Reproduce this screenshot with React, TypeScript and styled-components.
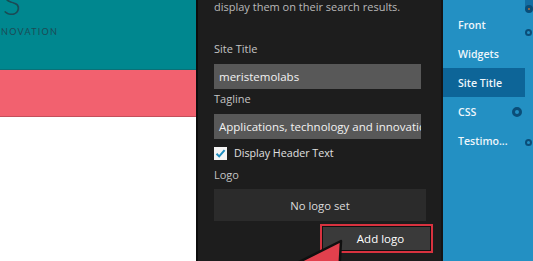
import { createGlobalStyle, styled } from 'styled-components'

const GlobalStyle = createGlobalStyle`
  html, body {
    margin: 0;
    padding: 0;
    background: #ffffff;
  }
  body {
    font-family: 'Open Sans', 'Liberation Sans', sans-serif;
  }
`

const Screen = styled.div`
  position: relative;
  width: 533px;
  height: 261px;
  display: flex;
  overflow: hidden;
`

/* ---------- site preview on the left ---------- */

const Preview = styled.div`
  width: 196px;
  display: flex;
  flex-direction: column;
  flex-shrink: 0;
`

const Masthead = styled.div`
  height: 70px;
  background: #00878f;
  border-bottom: 1px solid #0b7077;
  box-sizing: border-box;
  overflow: hidden;
  color: #1c4b55;
`

const LogoGlyph = styled.div`
  font-family: Lato, 'Liberation Sans', sans-serif;
  font-weight: 300;
  font-size: 34px;
  line-height: 27px;
  height: 27px;
  margin-top: -12px;
  margin-left: 3px;
`

const Slogan = styled.div`
  font-family: Lato, 'Liberation Sans', sans-serif;
  font-size: 9px;
  line-height: 11px;
  letter-spacing: 1.3px;
  margin-top: 11px;
  margin-left: 1px;
`

const Band = styled.div`
  height: 47px;
  background: #f2616f;
  border-bottom: 1px solid #c44f5b;
  box-sizing: border-box;
`

const Blank = styled.div`
  flex: 1;
  background: #ffffff;
`

const Divider = styled.div`
  width: 2px;
  background: #0d0d0d;
  flex-shrink: 0;
`

/* ---------- customizer panel ---------- */

const Panel = styled.div`
  width: 243px;
  flex-shrink: 0;
  background: #1d1d1d;
  padding: 0 0 0 16px;
  box-sizing: border-box;
  display: flex;
  flex-direction: column;
  color: #c8c8c8;
  font-size: 11px;
`

const Note = styled.div`
  line-height: 16px;
  margin-top: -1px;
  color: #b9b9b9;
  font-size: 11px;
`

const Label = styled.div<{ $top: number }>`
  line-height: 16px;
  margin-top: ${(p) => p.$top}px;
  color: #c4c4c4;
`

const Field = styled.div`
  width: 207px;
  height: 25px;
  margin-top: 7px;
  background: #585858;
  color: #f2f2f2;
  box-sizing: border-box;
  padding: 0 5px;
  display: flex;
  align-items: center;
  white-space: nowrap;
  overflow: hidden;
  font-size: 11.5px;
`

const CheckRow = styled.label`
  display: flex;
  align-items: center;
  gap: 7px;
  margin-top: 8px;
  height: 12px;
  color: #e0e0e0;
  font-size: 10.7px;
`

const Box = styled.span`
  width: 13px;
  height: 13px;
  background: #f4f4f4;
  display: flex;
  align-items: center;
  justify-content: center;
`

const LogoSlot = styled.div`
  width: 212px;
  height: 32px;
  margin-top: 6px;
  background: #2b2b2b;
  display: flex;
  align-items: center;
  justify-content: center;
  color: #dcdcdc;
  font-size: 11.3px;
`

const AddButton = styled.button`
  align-self: flex-start;
  margin: 3px 0 0 106px;
  width: 113px;
  height: 29px;
  box-sizing: border-box;
  border: 2px solid #d8323f;
  outline: 1px solid #111;
  outline-offset: -3px;
  background: #3a3a3a;
  color: #ffffff;
  font-family: 'Open Sans', 'Liberation Sans', sans-serif;
  font-size: 11.5px;
  padding: 0 0 0 8px;
`

const Gutter = styled.div`
  width: 2px;
  background: #141414;
  flex-shrink: 0;
`

/* ---------- section list on the right ---------- */

const Sections = styled.div`
  flex: 1;
  background: #2390c3;
  display: flex;
  flex-direction: column;
  margin-top: -19px;
`

const Section = styled.div<{ $active?: boolean }>`
  position: relative;
  height: 29px;
  width: 82px;
  box-sizing: border-box;
  padding-left: 15px;
  display: flex;
  align-items: center;
  background: ${(p) => (p.$active ? '#0d6598' : 'transparent')};
  color: #eef6fb;
  font-weight: 600;
  font-size: 10.6px;
  white-space: nowrap;
`

const EdgeTab = styled.div`
  position: absolute;
  left: 82px;
  top: 0;
  width: 12px;
  height: 29px;
  background: #136ea3;
`

const Dot = styled.span<{ $x: number; $y: number; $size: number; $fill: string }>`
  position: absolute;
  left: ${(p) => p.$x}px;
  top: ${(p) => p.$y}px;
  width: ${(p) => p.$size}px;
  height: ${(p) => p.$size}px;
  border-radius: 50%;
  box-sizing: border-box;
  border: ${(p) => Math.round(p.$size / 3)}px solid #0a4d78;
  background: ${(p) => p.$fill};
`

const Pointer = styled.svg`
  position: absolute;
  left: 0;
  top: 0;
  pointer-events: none;
`

export default function App() {
  return (
    <>
      <GlobalStyle />
      <Screen>
        <Preview>
          <Masthead>
            <LogoGlyph>S</LogoGlyph>
            <Slogan>NOVATION</Slogan>
          </Masthead>
          <Band />
          <Blank />
        </Preview>
        <Divider />
        <Panel>
          <Note>display them on their search results.</Note>
          <Label $top={26}>Site Title</Label>
          <Field>meristemolabs</Field>
          <Label $top={2}>Tagline</Label>
          <Field>Applications, technology and innovation</Field>
          <CheckRow>
            <Box>
              <svg width="11" height="11" viewBox="0 0 11 11">
                <path d="M1.5 5.8 L4.2 8.4 L9.6 2.2" fill="none" stroke="#1e8cbe" strokeWidth="2" />
              </svg>
            </Box>
            Display Header Text
          </CheckRow>
          <Label $top={8}>Logo</Label>
          <LogoSlot>No logo set</LogoSlot>
          <AddButton>Add logo</AddButton>
        </Panel>
        <Gutter />
        <Sections>
          <Section>
            Header
            <EdgeTab />
            <Dot $x={82} $y={24} $size={8} $fill="#b5703a" />
          </Section>
          <Section>
            Front
            <Dot $x={82} $y={19} $size={7} $fill="#2390c3" />
          </Section>
          <Section>Widgets</Section>
          <Section $active>Site Title</Section>
          <Section>
            CSS
            <Dot $x={69} $y={10} $size={10} $fill="#2390c3" />
          </Section>
          <Section>
            Testimo...
            <Dot $x={82} $y={13} $size={7} $fill="#2390c3" />
          </Section>
        </Sections>
        <Pointer width="533" height="261" viewBox="0 0 533 261">
          <polygon points="341,241 283,270 339,276" fill="#e2404d" stroke="#101010" strokeWidth="2.5" strokeLinejoin="round" />
        </Pointer>
      </Screen>
    </>
  )
}
